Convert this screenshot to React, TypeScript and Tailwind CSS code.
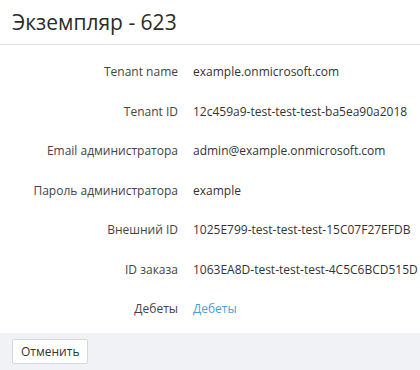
import React from 'react';

const rows: { label: string; value: string; link?: boolean }[] = [
  { label: 'Tenant name', value: 'example.onmicrosoft.com' },
  { label: 'Tenant ID', value: '12c459a9-test-test-test-ba5ea90a2018' },
  { label: 'Email администратора', value: 'admin@example.onmicrosoft.com' },
  { label: 'Пароль администратора', value: 'example' },
  { label: 'Внешний ID', value: '1025E799-test-test-test-15C07F27EFDB' },
  { label: 'ID заказа', value: '1063EA8D-test-test-test-4C5C6BCD515D' },
  { label: 'Дебеты', value: 'Дебеты', link: true },
];

const App: React.FC = () => {
  return (
    <div className="w-[420px] h-[370px] bg-white flex flex-col text-[#333] font-['Open_Sans',sans-serif]">
      <div className="h-[45px] shrink-0 border-b border-[#dde1e6] px-3 flex items-center">
        <h1 className="text-[21px] leading-none text-[#2b2b2b] pt-[1px]">Экземпляр - 623</h1>
      </div>
      <div className="h-[288px] shrink-0 overflow-hidden pt-[18px] flex flex-col gap-[21.5px]">
        {rows.map((r) => (
          <div key={r.label} className="flex text-[12px] leading-[18px] whitespace-nowrap">
            <div className="w-[178px] text-right text-[#444]">{r.label}</div>
            <div className="pl-[15px]">
              {r.link ? <a className="text-[#4a9fe0] cursor-pointer">{r.value}</a> : r.value}
            </div>
          </div>
        ))}
      </div>
      <div className="h-[37px] shrink-0 bg-[#f0f2f5] px-3 flex items-center">
        <button className="h-[25px] px-[8px] bg-white border border-[#d5d8dc] rounded-[2px] text-[12px] text-[#333]">
          Отменить
        </button>
      </div>
    </div>
  );
};

export default App;
